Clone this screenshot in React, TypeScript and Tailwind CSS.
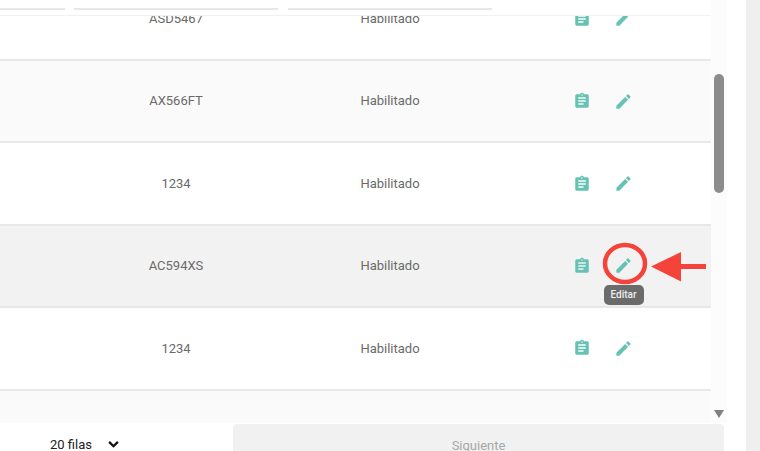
const ClipIcon = () => (
  <svg viewBox="0 0 24 24" className="w-[18px] h-[18px] fill-[#66c3b4]">
    <path d="M19 3h-4.18C14.4 1.84 13.3 1 12 1c-1.3 0-2.4.84-2.82 2H5c-1.1 0-2 .9-2 2v14c0 1.1.9 2 2 2h14c1.1 0 2-.9 2-2V5c0-1.1-.9-2-2-2zm-7 0c.55 0 1 .45 1 1s-.45 1-1 1-1-.45-1-1 .45-1 1-1zm2 14H7v-2h7v2zm3-4H7v-2h10v2zm0-4H7V7h10v2z" />
  </svg>
);

const EditIcon = () => (
  <svg viewBox="0 0 24 24" className="w-[19px] h-[19px] fill-[#66c3b4]">
    <path d="M3 17.25V21h3.75L17.81 9.94l-3.75-3.75L3 17.25zM20.71 7.04c.39-.39.39-1.02 0-1.41l-2.34-2.34c-.39-.39-1.02-.39-1.41 0l-1.83 1.83 3.75 3.75 1.83-1.83z" />
  </svg>
);

const rows = [
  { code: "ASD5467", bg: "bg-white" },
  { code: "AX566FT", bg: "bg-[#fafafa]" },
  { code: "1234", bg: "bg-white" },
  { code: "AC594XS", bg: "bg-[#f2f2f2]", active: true },
  { code: "1234", bg: "bg-white" },
  { code: "", bg: "bg-[#fafafa]" },
];

export default function App() {
  return (
    <div className="flex w-[760px] h-[451px] overflow-hidden bg-white font-['Roboto',sans-serif]">
      <div className="flex flex-col w-[746px] h-full">
        <div className="flex flex-1 min-h-0">
          <div className="flex flex-col w-[711px]">
            <div className="flex shrink-0 h-[16px] pt-[8px] border-b border-[#f1f1f1] bg-white">
              <div className="w-[65px] h-[2px] bg-[#e8e8e8]" />
              <div className="w-[204px] h-[2px] ml-[9px] bg-[#e8e8e8]" />
              <div className="w-[204px] h-[2px] ml-[10px] bg-[#e8e8e8]" />
            </div>
            <div className="flex-1 min-h-0 overflow-hidden">
              <div className="flex flex-col -mt-[37.4px]">
                {rows.map((r, i) => (
                  <div
                    key={i}
                    className={`flex items-center shrink-0 h-[82.4px] border-b-2 border-[#e8e8e8] text-[13px] text-[#6a6a6a] ${r.bg}`}
                  >
                    <div className="w-[69px]" />
                    <div className="w-[214px] text-center">{r.code}</div>
                    <div className="w-[214px] text-center">{r.code ? "Habilitado" : ""}</div>
                    {r.code && (
                      <div className="flex items-center gap-[23px] pl-[76px]">
                        <ClipIcon />
                        <div className="relative">
                          <EditIcon />
                          {r.active && (
                            <div className="absolute left-1/2 -translate-x-1/2 top-[29px] w-[40px] h-[20px] rounded-[5px] bg-[#6b6b6b] text-center text-[#eee] text-[10px] leading-[20px] font-medium">
                              Editar
                            </div>
                          )}
                        </div>
                      </div>
                    )}
                  </div>
                ))}
              </div>
            </div>
          </div>
          <div className="relative w-[16px] bg-[#fcfcfc]">
            <div className="absolute left-[3px] top-[74px] w-[10px] h-[119px] rounded-full bg-[#8c8c8c]" />
            <svg viewBox="0 0 10 8" className="absolute left-[3px] top-[410px] w-[10px] h-[8px] fill-[#808080]">
              <path d="M0 0h10L5 8z" />
            </svg>
          </div>
        </div>
        <div className="flex shrink-0 h-[28px] bg-white">
          <div className="flex items-start w-[233px] pl-[50px] pt-[14px] text-[13px] leading-[16px] text-[#222]">
            <span>20 filas</span>
            <svg viewBox="0 0 12 8" className="ml-[16px] mt-[4px] w-[11px] h-[7px] fill-none stroke-[#111] stroke-[2.6]">
              <path d="M1 1l5 5 5-5" />
            </svg>
          </div>
          <div className="w-[491px] mt-[1px] rounded-t-[4px] bg-[#f1f1f1] text-center text-[13px] leading-[16px] pt-[14px] text-[#a8a8a8]">
            Siguiente
          </div>
        </div>
      </div>
      <div className="w-[14px] h-full bg-[#efefef]" />
      <svg viewBox="0 0 760 451" className="absolute left-0 top-0 w-[760px] h-[451px] pointer-events-none">
        <ellipse cx="625" cy="263.5" rx="20" ry="18.5" fill="none" stroke="#f4433a" strokeWidth="4.5" />
        <path d="M651 266.5l30-14.5v12h25v5h-25v12.500z" fill="#f4433a" />
      </svg>
    </div>
  );
}
